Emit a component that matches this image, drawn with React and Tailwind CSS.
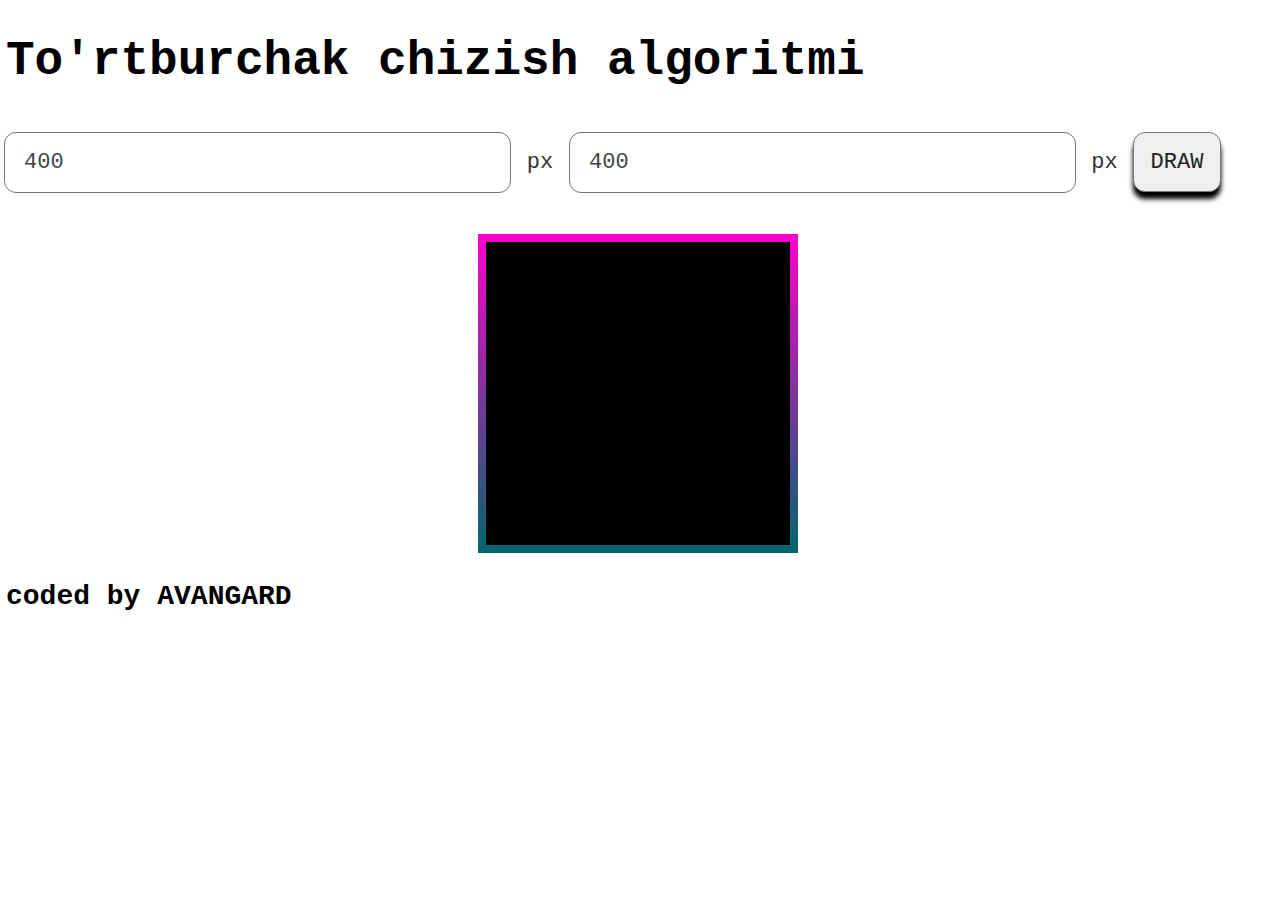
export default function App() {
  const mono = { fontFamily: '"Liberation Mono", "Courier New", monospace' };
  return (
    <div style={mono} className="bg-white text-black min-h-[910px]">
      <h1 className="text-[47.7px] font-bold leading-none px-[6px] pt-[38px] pb-[46px]">To'rtburchak chizish algoritmi</h1>
      <div className="flex items-center px-[4px]">
        <div className="w-[507px] h-[61px] border border-[#767676] rounded-[12px] flex items-center px-[19px] text-[22px] text-[#444]">400</div>
        <span className="w-[58px] text-center text-[22px] text-[#333]">px</span>
        <div className="w-[507px] h-[61px] border border-[#767676] rounded-[12px] flex items-center px-[19px] text-[22px] text-[#444]">400</div>
        <span className="w-[57px] text-center text-[22px] text-[#333]">px</span>
        <button style={mono} className="w-[88px] h-[60px] bg-[#efefef] border border-[#767676] rounded-[12px] text-[22px] font-normal text-[#222] shadow-[0_7px_5px_rgba(0,0,0,1)]">DRAW</button>
      </div>
      <div className="flex justify-center pt-[41px]">
        <div className="w-[320px] h-[319px] p-[8px] bg-[linear-gradient(to_bottom,#ff00cc,#00676f)]">
          <div className="w-full h-full bg-black"></div>
        </div>
      </div>
      <div className="px-[6px] pt-[26px] text-[28px] leading-[36px] font-bold">coded by AVANGARD</div>
    </div>
  );
}
